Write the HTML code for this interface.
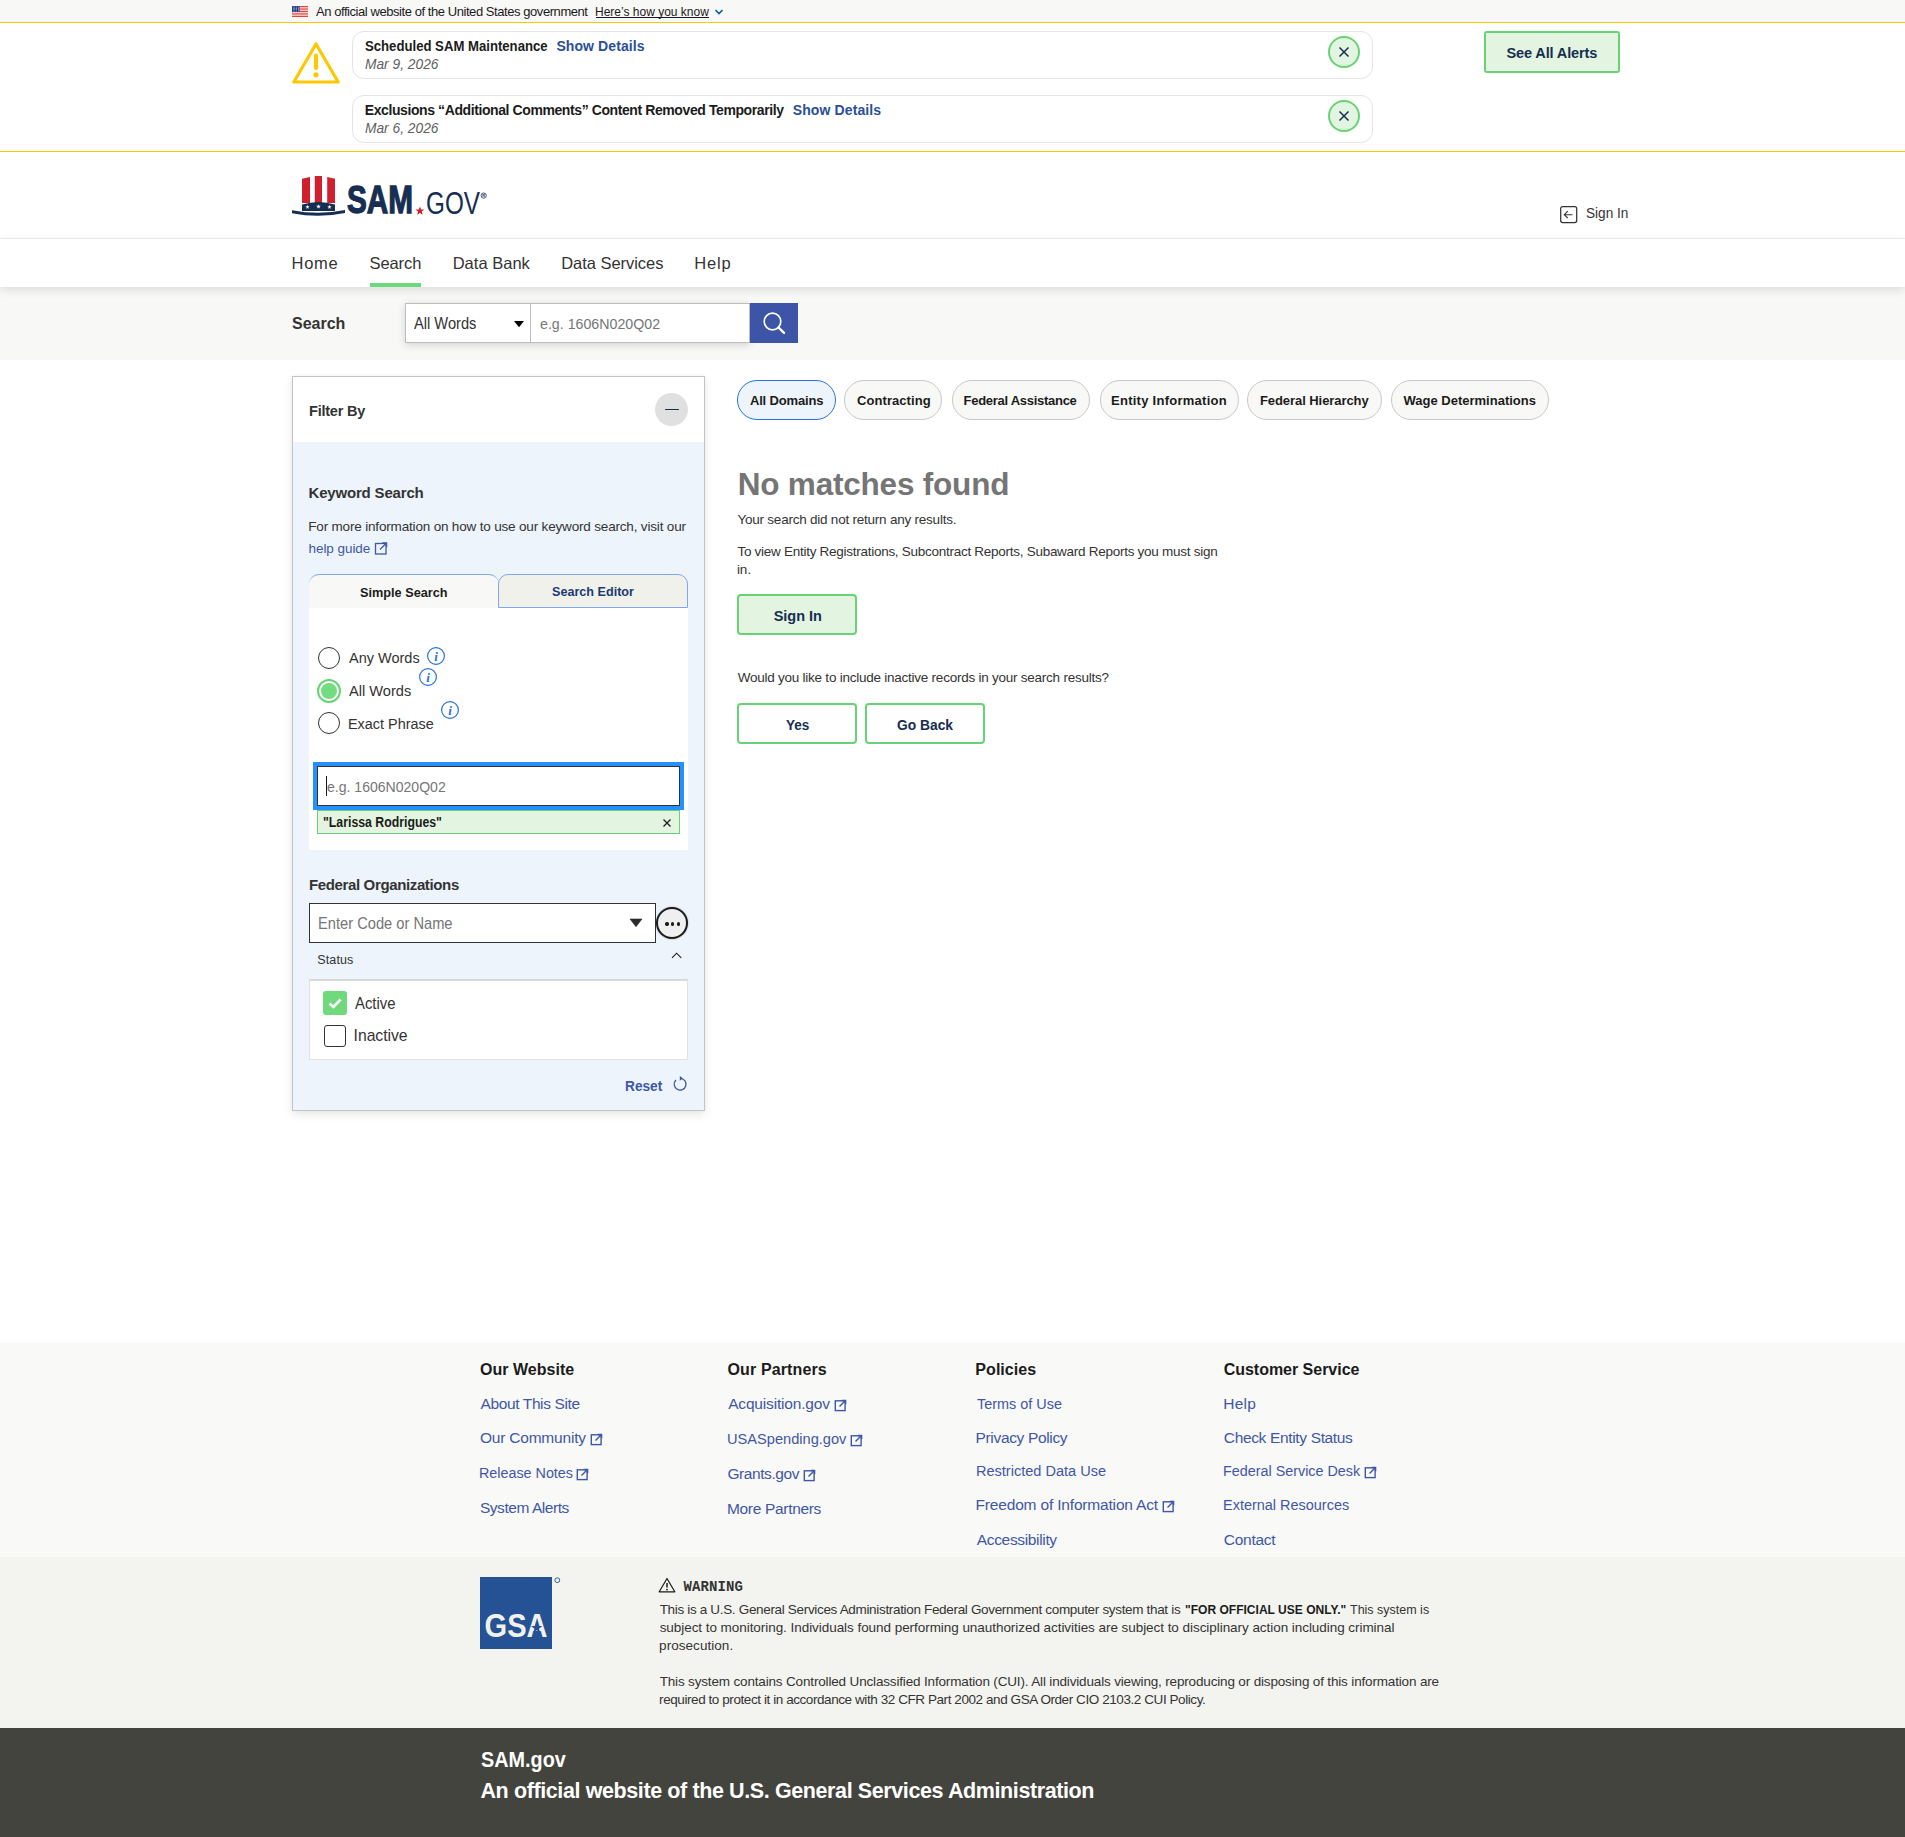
<!DOCTYPE html>
<html><head><meta charset="utf-8"><title>SAM.gov | Search</title>
<style>
html,body{margin:0;padding:0;}
body{width:1905px;height:1837px;position:relative;overflow:hidden;background:#fff;font-family:"Liberation Sans",sans-serif;}
.t{position:absolute;white-space:nowrap;}
</style></head><body>
<div style="position:absolute;left:0px;top:0px;width:1905px;height:22px;background:#f8f8f6"></div>
<div style="position:absolute;left:0px;top:22px;width:1905px;height:1px;background:#fcc800"></div>
<svg style="position:absolute;left:292px;top:6px;" width="16" height="11" viewBox="0 0 16 11"><rect width="16" height="11" fill="#fff"/><rect y="0.00" width="16" height="0.85" fill="#d52b1e"/><rect y="1.69" width="16" height="0.85" fill="#d52b1e"/><rect y="3.38" width="16" height="0.85" fill="#d52b1e"/><rect y="5.08" width="16" height="0.85" fill="#d52b1e"/><rect y="6.77" width="16" height="0.85" fill="#d52b1e"/><rect y="8.46" width="16" height="0.85" fill="#d52b1e"/><rect y="10.15" width="16" height="0.85" fill="#d52b1e"/><rect width="7.5" height="6" fill="#1e3a8a"/><circle cx="1.2" cy="1.0" r="0.45" fill="#fff"/><circle cx="2.9" cy="1.0" r="0.45" fill="#fff"/><circle cx="4.6" cy="1.0" r="0.45" fill="#fff"/><circle cx="6.3" cy="1.0" r="0.45" fill="#fff"/><circle cx="1.2" cy="2.4" r="0.45" fill="#fff"/><circle cx="2.9" cy="2.4" r="0.45" fill="#fff"/><circle cx="4.6" cy="2.4" r="0.45" fill="#fff"/><circle cx="6.3" cy="2.4" r="0.45" fill="#fff"/><circle cx="1.2" cy="3.7" r="0.45" fill="#fff"/><circle cx="2.9" cy="3.7" r="0.45" fill="#fff"/><circle cx="4.6" cy="3.7" r="0.45" fill="#fff"/><circle cx="6.3" cy="3.7" r="0.45" fill="#fff"/><circle cx="1.2" cy="5.1" r="0.45" fill="#fff"/><circle cx="2.9" cy="5.1" r="0.45" fill="#fff"/><circle cx="4.6" cy="5.1" r="0.45" fill="#fff"/><circle cx="6.3" cy="5.1" r="0.45" fill="#fff"/></svg>
<div style="position:absolute;left:596px;top:17px;width:113px;height:1px;background:#1b1b1b"></div>
<svg style="position:absolute;left:714px;top:8px;" width="10" height="8" viewBox="0 0 10 8"><path d="M1.5 2 L5 5.5 L8.5 2" fill="none" stroke="#005ea2" stroke-width="1.6"/></svg>
<div style="position:absolute;left:0px;top:152px;width:1905px;height:0px;"></div>
<div style="position:absolute;left:0px;top:151px;width:1905px;height:1px;background:#fcc800"></div>
<svg style="position:absolute;left:290px;top:40px;" width="52" height="46" viewBox="0 0 52 46"><path d="M26 4 L3.8 42 L48.2 42 Z" fill="none" stroke="#fcc800" stroke-width="3.2" stroke-linejoin="round"/><path d="M26 15.5 L26 28" stroke="#fcc800" stroke-width="4.2" stroke-linecap="round"/><circle cx="26" cy="34.8" r="2.6" fill="#fcc800"/></svg>
<div style="position:absolute;left:352px;top:31px;width:1019px;height:46px;border:1px solid #e4e4e4;border-radius:12px;background:#fff"></div>
<div style="position:absolute;left:1328px;top:36px;width:28px;height:28px;border:2px solid #66d474;border-radius:50%;background:#e3f4e0"></div>
<svg style="position:absolute;left:1338px;top:46px;" width="12" height="12" viewBox="0 0 12 12"><path d="M1.5 1.5 L10.5 10.5 M10.5 1.5 L1.5 10.5" stroke="#162e51" stroke-width="1.5"/></svg>
<div style="position:absolute;left:352px;top:95px;width:1019px;height:46px;border:1px solid #e4e4e4;border-radius:12px;background:#fff"></div>
<div style="position:absolute;left:1328px;top:100px;width:28px;height:28px;border:2px solid #66d474;border-radius:50%;background:#e3f4e0"></div>
<svg style="position:absolute;left:1338px;top:110px;" width="12" height="12" viewBox="0 0 12 12"><path d="M1.5 1.5 L10.5 10.5 M10.5 1.5 L1.5 10.5" stroke="#162e51" stroke-width="1.5"/></svg>
<div style="position:absolute;left:1484px;top:31px;width:132px;height:38px;border:2px solid #66d474;border-radius:3px;background:#e3f4e0"></div>
<div style="position:absolute;left:0px;top:238px;width:1905px;height:1px;background:#efefea"></div>
<svg style="position:absolute;left:290px;top:174px;" width="200" height="46" viewBox="0 0 200 46"><path d="M12 4.8 L20 3 L20 29 L12 29 Z" fill="#d0202f"/><rect x="24.8" y="2" width="7.2" height="27" fill="#d0202f"/><path d="M37.2 3 L45 4.8 L45 29 L37.2 29 Z" fill="#d0202f"/><path d="M12 37 V30.5 Q28.5 25.5 45 30.5 V37 Z" fill="#162e51"/><path d="M2 36.2 Q28.5 41.5 55 36 L55 39 Q28.5 44.5 2 39.2 Z" fill="#162e51"/><polygon points="17.50,30.80 18.04,32.25 19.59,32.32 18.38,33.29 18.79,34.78 17.50,33.92 16.21,34.78 16.62,33.29 15.41,32.32 16.96,32.25" fill="#fff"/><polygon points="28.50,30.20 29.09,31.78 30.78,31.86 29.46,32.91 29.91,34.54 28.50,33.61 27.09,34.54 27.54,32.91 26.22,31.86 27.91,31.78" fill="#fff"/><polygon points="39.50,30.80 40.04,32.25 41.59,32.32 40.38,33.29 40.79,34.78 39.50,33.92 38.21,34.78 38.62,33.29 37.41,32.32 38.96,32.25" fill="#fff"/><polygon points="129.90,32.40 131.04,35.44 134.27,35.58 131.74,37.60 132.60,40.72 129.90,38.93 127.20,40.72 128.06,37.60 125.53,35.58 128.76,35.44" fill="#d0202f"/><text x="57" y="39" font-family="Liberation Sans" font-weight="700" font-size="39" textLength="66" lengthAdjust="spacingAndGlyphs" fill="#162e51" stroke="#162e51" stroke-width="1.3">SAM</text><text x="136" y="39.5" font-family="Liberation Sans" font-weight="400" font-size="31" textLength="54" lengthAdjust="spacingAndGlyphs" fill="#162e51">GOV</text><circle cx="193.7" cy="21.6" r="2.6" fill="none" stroke="#162e51" stroke-width="0.8"/><text x="192.2" y="23.2" font-family="Liberation Sans" font-size="4" font-weight="700" fill="#162e51">R</text></svg>
<svg style="position:absolute;left:1559px;top:205px;" width="20" height="20" viewBox="0 0 20 20"><rect x="1.7" y="1.6" width="16" height="16" rx="2" fill="none" stroke="#333" stroke-width="1.25"/><path d="M13.5 9.7 H5.5 M8.8 6.2 L5.3 9.7 L8.8 13.2" fill="none" stroke="#333" stroke-width="1.15"/></svg>
<div style="position:absolute;left:0px;top:239px;width:1905px;height:48px;background:#fff;box-shadow:0 3px 9px rgba(0,0,0,0.11);z-index:2"></div>
<div style="position:absolute;left:370px;top:283px;width:51px;height:4px;background:#6cd97a;z-index:3"></div>
<div style="position:absolute;left:0px;top:287px;width:1905px;height:73px;background:#f8f8f6"></div>
<div style="position:absolute;left:405px;top:303px;width:345px;height:40px;background:#fff;box-shadow:0 2px 8px rgba(0,0,0,0.15)"></div>
<div style="position:absolute;left:405px;top:303px;width:126px;height:40px;box-sizing:border-box;border:1px solid #bdbdbd;background:#fff"></div>
<div style="position:absolute;left:530px;top:303px;width:220px;height:40px;box-sizing:border-box;border:1px solid #bdbdbd;background:#fff"></div>
<svg style="position:absolute;left:513px;top:320px;" width="12" height="8" viewBox="0 0 12 8"><path d="M1 1 H11 L6 7.3 Z" fill="#000"/></svg>
<div style="position:absolute;left:750px;top:303px;width:48px;height:40px;background:#3d55a6"></div>
<svg style="position:absolute;left:760px;top:308px;" width="28" height="30" viewBox="0 0 28 30"><circle cx="12.5" cy="13.5" r="8.3" fill="none" stroke="#fff" stroke-width="1.7"/><path d="M18.5 19.5 L24 24.8" stroke="#fff" stroke-width="2.4" stroke-linecap="round"/></svg>
<div style="position:absolute;left:292px;top:376px;width:413px;height:735px;box-sizing:border-box;border:1px solid #c4c4c4;background:#edf4fb;box-shadow:0 4px 9px rgba(0,0,0,0.09),0 0 3px rgba(0,0,0,0.05)"></div>
<div style="position:absolute;left:293px;top:377px;width:411px;height:65px;background:#fff"></div>
<div style="position:absolute;left:655px;top:393px;width:33px;height:33px;background:#e0e0e0;border-radius:50%"></div>
<div style="position:absolute;left:665px;top:408.7px;width:14px;height:1.6px;background:#162e51;border-radius:1px"></div>
<svg style="position:absolute;left:374px;top:542px;" width="14" height="13" viewBox="0 0 14 13"><rect x="1.5" y="1.5" width="10.5" height="10.5" fill="none" stroke="#3f57a6" stroke-width="1.3"/><path d="M6 7.5 L12.5 1" stroke="#3f57a6" stroke-width="1.3"/><path d="M8.3 0.9 H12.6 V5.2" fill="none" stroke="#3f57a6" stroke-width="1.3"/></svg>
<div style="position:absolute;left:309px;top:608px;width:379px;height:242px;background:#fff"></div>
<div style="position:absolute;left:309px;top:574px;width:190px;height:34px;box-sizing:border-box;border-top:1px solid #7ea6f1;border-radius:10px 10px 0 0;background:#f8f8f6"></div>
<div style="position:absolute;left:498px;top:574px;width:190px;height:34px;box-sizing:border-box;border:1px solid #7ea6f1;border-radius:10px 10px 0 0;background:#f1f1ec"></div>
<div style="position:absolute;left:318px;top:647px;width:22px;height:22px;box-sizing:border-box;border:1px solid #333;border-radius:50%;background:#fff;top:647px"></div>
<div style="position:absolute;left:318px;top:647px;width:22px;height:22px;box-sizing:border-box;border:1px solid #333;border-radius:50%;background:#fff;top:712px"></div>
<div style="position:absolute;left:317px;top:679px;width:24px;height:24px;box-sizing:border-box;border:2px solid #66d474;border-radius:50%;background:#fff"></div>
<div style="position:absolute;left:321px;top:683px;width:16px;height:16px;border-radius:50%;background:#73dc80"></div>
<svg style="position:absolute;left:426px;top:646px;" width="20" height="20" viewBox="0 0 20 20"><circle cx="10" cy="10" r="8.4" fill="none" stroke="#2672de" stroke-width="1.2"/><text x="10" y="14.6" text-anchor="middle" font-family="Liberation Serif" font-style="italic" font-weight="700" font-size="13" fill="#2672de">i</text></svg>
<svg style="position:absolute;left:418px;top:667px;" width="20" height="20" viewBox="0 0 20 20"><circle cx="10" cy="10" r="8.4" fill="none" stroke="#2672de" stroke-width="1.2"/><text x="10" y="14.6" text-anchor="middle" font-family="Liberation Serif" font-style="italic" font-weight="700" font-size="13" fill="#2672de">i</text></svg>
<svg style="position:absolute;left:440px;top:700px;" width="20" height="20" viewBox="0 0 20 20"><circle cx="10" cy="10" r="8.4" fill="none" stroke="#2672de" stroke-width="1.2"/><text x="10" y="14.6" text-anchor="middle" font-family="Liberation Serif" font-style="italic" font-weight="700" font-size="13" fill="#2672de">i</text></svg>
<div style="position:absolute;left:313px;top:762px;width:371px;height:48px;background:#2491ff"></div>
<div style="position:absolute;left:317px;top:766px;width:363px;height:40px;box-sizing:border-box;border:1px solid #333;background:#fff"></div>
<div style="position:absolute;left:326px;top:776px;width:1.3px;height:20px;background:#1b1b1b"></div>
<div style="position:absolute;left:317px;top:810px;width:363px;height:24px;box-sizing:border-box;border:1px solid #66d474;background:#e3f4e0"></div>
<svg style="position:absolute;left:661px;top:817px;" width="12" height="12" viewBox="0 0 12 12"><path d="M2.5 2.5 L9.5 9.5 M9.5 2.5 L2.5 9.5" stroke="#1b1b1b" stroke-width="1.3"/></svg>
<div style="position:absolute;left:309px;top:903px;width:347px;height:40px;box-sizing:border-box;border:1px solid #333;background:#fff"></div>
<svg style="position:absolute;left:628px;top:917px;" width="16" height="12" viewBox="0 0 16 12"><path d="M2 2 H14 L8 9.7 Z" fill="#2b2b2b" stroke="#2b2b2b" stroke-width="0.6" stroke-linejoin="round"/></svg>
<div style="position:absolute;left:656px;top:907px;width:28px;height:28px;border:2px solid #1b1b1b;border-radius:50%;background:#efefef;box-shadow:0 0 2px rgba(0,0,0,0.3)"></div>
<div style="position:absolute;left:665.3px;top:922.4px;width:3.4px;height:3.4px;background:#1b1b1b;border-radius:50%"></div>
<div style="position:absolute;left:670.9px;top:922.4px;width:3.4px;height:3.4px;background:#1b1b1b;border-radius:50%"></div>
<div style="position:absolute;left:676.5px;top:922.4px;width:3.4px;height:3.4px;background:#1b1b1b;border-radius:50%"></div>
<svg style="position:absolute;left:669px;top:949px;" width="16" height="12" viewBox="0 0 16 12"><path d="M3 8.8 L7.6 4.2 L12.2 8.8" fill="none" stroke="#1b1b1b" stroke-width="1.1"/></svg>
<div style="position:absolute;left:309px;top:979px;width:379px;height:81px;box-sizing:border-box;border:1px solid #e2e2e2;border-top:2px solid #dadada;background:#fff"></div>
<div style="position:absolute;left:323px;top:991px;width:24px;height:24px;background:#70d97b;border-radius:3px"></div>
<svg style="position:absolute;left:323px;top:991px;" width="24" height="24" viewBox="0 0 24 24"><path d="M6.5 12.5 L10.5 16 L17.5 8.5" fill="none" stroke="#fff" stroke-width="2.6"/></svg>
<div style="position:absolute;left:324px;top:1025px;width:22px;height:22px;box-sizing:border-box;border:1.5px solid #333;border-radius:3px;background:#fff"></div>
<svg style="position:absolute;left:670.5px;top:1075px;" width="18" height="19" viewBox="0 0 18 19"><path d="M9.1 3.3 A5.9 5.9 0 1 1 4.93 5.03" fill="none" stroke="#3f57a6" stroke-width="1.3"/><path d="M8.8 0.9 L11.9 3.3 L8.8 5.7 Z" fill="#3f57a6"/></svg>
<div style="position:absolute;left:737px;top:380px;width:99px;height:40px;box-sizing:border-box;border:1.3px solid #2672de;border-radius:20px;background:#eef4fb"></div>
<div style="position:absolute;left:844px;top:380px;width:98px;height:40px;box-sizing:border-box;border:1px solid #c8c8c8;border-radius:20px;background:#f8f8f6"></div>
<div style="position:absolute;left:952px;top:380px;width:138px;height:40px;box-sizing:border-box;border:1px solid #c8c8c8;border-radius:20px;background:#f8f8f6"></div>
<div style="position:absolute;left:1100px;top:380px;width:139px;height:40px;box-sizing:border-box;border:1px solid #c8c8c8;border-radius:20px;background:#f8f8f6"></div>
<div style="position:absolute;left:1247px;top:380px;width:135px;height:40px;box-sizing:border-box;border:1px solid #c8c8c8;border-radius:20px;background:#f8f8f6"></div>
<div style="position:absolute;left:1391px;top:380px;width:158px;height:40px;box-sizing:border-box;border:1px solid #c8c8c8;border-radius:20px;background:#f8f8f6"></div>
<div style="position:absolute;left:737px;top:594px;width:116px;height:37px;border:2px solid #66d474;border-radius:4px;background:#e3f4e0"></div>
<div style="position:absolute;left:737px;top:703px;width:116px;height:37px;border:2px solid #66d474;border-radius:4px;background:#fff"></div>
<div style="position:absolute;left:865px;top:703px;width:116px;height:37px;border:2px solid #66d474;border-radius:4px;background:#fff"></div>
<div style="position:absolute;left:0px;top:1343px;width:1905px;height:214px;background:#f9f9f7"></div>
<svg style="position:absolute;left:590px;top:1433px;" width="13" height="13" viewBox="0 0 13 13"><rect x="1.3" y="1.8" width="9.8" height="9.8" fill="none" stroke="#3f57a6" stroke-width="1.4"/><path d="M5.5 7.5 L11.2 1.8" stroke="#3f57a6" stroke-width="1.4"/><path d="M7.8 1.5 H11.6 V5.3" fill="none" stroke="#3f57a6" stroke-width="1.4"/></svg>
<svg style="position:absolute;left:576px;top:1468px;" width="13" height="13" viewBox="0 0 13 13"><rect x="1.3" y="1.8" width="9.8" height="9.8" fill="none" stroke="#3f57a6" stroke-width="1.4"/><path d="M5.5 7.5 L11.2 1.8" stroke="#3f57a6" stroke-width="1.4"/><path d="M7.8 1.5 H11.6 V5.3" fill="none" stroke="#3f57a6" stroke-width="1.4"/></svg>
<svg style="position:absolute;left:834px;top:1399px;" width="13" height="13" viewBox="0 0 13 13"><rect x="1.3" y="1.8" width="9.8" height="9.8" fill="none" stroke="#3f57a6" stroke-width="1.4"/><path d="M5.5 7.5 L11.2 1.8" stroke="#3f57a6" stroke-width="1.4"/><path d="M7.8 1.5 H11.6 V5.3" fill="none" stroke="#3f57a6" stroke-width="1.4"/></svg>
<svg style="position:absolute;left:850px;top:1434px;" width="13" height="13" viewBox="0 0 13 13"><rect x="1.3" y="1.8" width="9.8" height="9.8" fill="none" stroke="#3f57a6" stroke-width="1.4"/><path d="M5.5 7.5 L11.2 1.8" stroke="#3f57a6" stroke-width="1.4"/><path d="M7.8 1.5 H11.6 V5.3" fill="none" stroke="#3f57a6" stroke-width="1.4"/></svg>
<svg style="position:absolute;left:803px;top:1469px;" width="13" height="13" viewBox="0 0 13 13"><rect x="1.3" y="1.8" width="9.8" height="9.8" fill="none" stroke="#3f57a6" stroke-width="1.4"/><path d="M5.5 7.5 L11.2 1.8" stroke="#3f57a6" stroke-width="1.4"/><path d="M7.8 1.5 H11.6 V5.3" fill="none" stroke="#3f57a6" stroke-width="1.4"/></svg>
<svg style="position:absolute;left:1162px;top:1500px;" width="13" height="13" viewBox="0 0 13 13"><rect x="1.3" y="1.8" width="9.8" height="9.8" fill="none" stroke="#3f57a6" stroke-width="1.4"/><path d="M5.5 7.5 L11.2 1.8" stroke="#3f57a6" stroke-width="1.4"/><path d="M7.8 1.5 H11.6 V5.3" fill="none" stroke="#3f57a6" stroke-width="1.4"/></svg>
<svg style="position:absolute;left:1364px;top:1466px;" width="13" height="13" viewBox="0 0 13 13"><rect x="1.3" y="1.8" width="9.8" height="9.8" fill="none" stroke="#3f57a6" stroke-width="1.4"/><path d="M5.5 7.5 L11.2 1.8" stroke="#3f57a6" stroke-width="1.4"/><path d="M7.8 1.5 H11.6 V5.3" fill="none" stroke="#3f57a6" stroke-width="1.4"/></svg>
<div style="position:absolute;left:0px;top:1557px;width:1905px;height:171px;background:#f3f4ef"></div>
<svg style="position:absolute;left:480px;top:1577px;" width="82" height="72" viewBox="0 0 82 72"><rect width="72" height="72" fill="#255294"/><text x="4.6" y="60.2" font-family="Liberation Sans" font-weight="700" font-size="34" textLength="63" lengthAdjust="spacingAndGlyphs" fill="#f1f1ec">GSA</text><polygon points="56.7,45 58.1,49 62.3,49.1 59,51.7 60.2,55.8 56.7,53.3 53.2,55.8 54.4,51.7 51.1,49.1 55.3,49" fill="#255294"/><circle cx="77.3" cy="3.2" r="2.4" fill="none" stroke="#255294" stroke-width="0.9"/></svg>
<svg style="position:absolute;left:658px;top:1577px;" width="18" height="16" viewBox="0 0 18 16"><path d="M9 1.5 L1.2 14.8 H16.8 Z" fill="none" stroke="#1b1b1b" stroke-width="1.2" stroke-linejoin="round"/><path d="M9 6 V10.5" stroke="#1b1b1b" stroke-width="1.5"/><circle cx="9" cy="12.6" r="0.9" fill="#1b1b1b"/></svg>
<div style="position:absolute;left:0px;top:1728px;width:1905px;height:109px;background:#44443e"></div>
<div class="t" style="left:316.00px;top:5px;font:normal 400 13px/1 'Liberation Sans', sans-serif;color:#1b1b1b;letter-spacing:-0.438px;">An official website of the United States government</div>
<div class="t" style="left:595.04px;top:5px;font:normal 400 13px/1 'Liberation Sans', sans-serif;color:#1b1b1b;transform:scaleX(0.9233);transform-origin:0 0;">Here’s how you know</div>
<div class="t" style="left:365.34px;top:39px;font:normal 700 14px/1 'Liberation Sans', sans-serif;color:#1b1b1b;transform:scaleX(0.9389);transform-origin:0 0;">Scheduled SAM Maintenance</div>
<div class="t" style="left:556.42px;top:39px;font:normal 700 14px/1 'Liberation Sans', sans-serif;color:#2a4f96;letter-spacing:0.087px;">Show Details</div>
<div class="t" style="left:365.19px;top:55.7px;font:italic 400 15px/1 'Liberation Sans', sans-serif;color:#606060;transform:scaleX(0.9177);transform-origin:0 0;">Mar 9, 2026</div>
<div class="t" style="left:364.76px;top:103px;font:normal 700 14px/1 'Liberation Sans', sans-serif;color:#1b1b1b;letter-spacing:-0.406px;">Exclusions “Additional Comments” Content Removed Temporarily</div>
<div class="t" style="left:792.72px;top:103px;font:normal 700 14px/1 'Liberation Sans', sans-serif;color:#2a4f96;letter-spacing:0.114px;">Show Details</div>
<div class="t" style="left:365.19px;top:119.80000000000001px;font:italic 400 15px/1 'Liberation Sans', sans-serif;color:#606060;transform:scaleX(0.9177);transform-origin:0 0;">Mar 6, 2026</div>
<div class="t" style="left:1506.51px;top:46px;font:normal 700 14.5px/1 'Liberation Sans', sans-serif;color:#162e51;letter-spacing:-0.121px;">See All Alerts</div>
<div class="t" style="left:1585.56px;top:205px;font:normal 400 15.5px/1 'Liberation Sans', sans-serif;color:#333333;transform:scaleX(0.8789);transform-origin:0 0;">Sign In</div>
<div class="t" style="left:291.58px;top:255.2px;font:normal 400 16.5px/1 'Liberation Sans', sans-serif;color:#333333;letter-spacing:0.668px;z-index:3;">Home</div>
<div class="t" style="left:369.54px;top:255.2px;font:normal 400 16.5px/1 'Liberation Sans', sans-serif;color:#333333;letter-spacing:-0.099px;z-index:3;">Search</div>
<div class="t" style="left:452.68px;top:255.2px;font:normal 400 16.5px/1 'Liberation Sans', sans-serif;color:#333333;letter-spacing:0.014px;z-index:3;">Data Bank</div>
<div class="t" style="left:561.18px;top:255.2px;font:normal 400 16.5px/1 'Liberation Sans', sans-serif;color:#333333;letter-spacing:-0.033px;z-index:3;">Data Services</div>
<div class="t" style="left:694.18px;top:255.2px;font:normal 400 16.5px/1 'Liberation Sans', sans-serif;color:#333333;letter-spacing:0.827px;z-index:3;">Help</div>
<div class="t" style="left:292.08px;top:316px;font:normal 700 16px/1 'Liberation Sans', sans-serif;color:#333333;letter-spacing:-0.015px;">Search</div>
<div class="t" style="left:414.30px;top:316px;font:normal 400 15.75px/1 'Liberation Sans', sans-serif;color:#333333;transform:scaleX(0.9306);transform-origin:0 0;">All Words</div>
<div class="t" style="left:539.73px;top:316.2px;font:normal 400 15.5px/1 'Liberation Sans', sans-serif;color:#767676;transform:scaleX(0.9163);transform-origin:0 0;">e.g. 1606N020Q02</div>
<div class="t" style="left:309.03px;top:404px;font:normal 700 14.5px/1 'Liberation Sans', sans-serif;color:#333333;letter-spacing:-0.225px;">Filter By</div>
<div class="t" style="left:308.50px;top:485px;font:normal 700 15px/1 'Liberation Sans', sans-serif;color:#333333;letter-spacing:-0.180px;">Keyword Search</div>
<div class="t" style="left:308.22px;top:519.6px;font:normal 400 13.5px/1 'Liberation Sans', sans-serif;color:#333333;letter-spacing:-0.173px;">For more information on how to use our keyword search, visit our</div>
<div class="t" style="left:308.49px;top:541.7px;font:normal 400 13.5px/1 'Liberation Sans', sans-serif;color:#3f57a6;letter-spacing:-0.056px;">help guide</div>
<div class="t" style="left:359.75px;top:585.5px;font:normal 700 13.5px/1 'Liberation Sans', sans-serif;color:#1b1b1b;transform:scaleX(0.9407);transform-origin:0 0;">Simple Search</div>
<div class="t" style="left:552.05px;top:585px;font:normal 700 13.5px/1 'Liberation Sans', sans-serif;color:#1c3a73;transform:scaleX(0.9338);transform-origin:0 0;">Search Editor</div>
<div class="t" style="left:349.00px;top:649.7px;font:normal 400 15.5px/1 'Liberation Sans', sans-serif;color:#333333;transform:scaleX(0.9354);transform-origin:0 0;">Any Words</div>
<div class="t" style="left:349.00px;top:682.9px;font:normal 400 15.5px/1 'Liberation Sans', sans-serif;color:#333333;transform:scaleX(0.9425);transform-origin:0 0;">All Words</div>
<div class="t" style="left:347.85px;top:715.6px;font:normal 400 15.5px/1 'Liberation Sans', sans-serif;color:#333333;transform:scaleX(0.9294);transform-origin:0 0;">Exact Phrase</div>
<div class="t" style="left:326.74px;top:778.6px;font:normal 400 15.5px/1 'Liberation Sans', sans-serif;color:#767676;transform:scaleX(0.9062);transform-origin:0 0;">e.g. 1606N020Q02</div>
<div class="t" style="left:322.86px;top:815px;font:normal 700 14px/1 'Liberation Sans', sans-serif;color:#1b1b1b;transform:scaleX(0.8782);transform-origin:0 0;">&quot;Larissa Rodrigues&quot;</div>
<div class="t" style="left:309.00px;top:877px;font:normal 700 15px/1 'Liberation Sans', sans-serif;color:#333333;letter-spacing:-0.365px;">Federal Organizations</div>
<div class="t" style="left:317.73px;top:916px;font:normal 400 15.75px/1 'Liberation Sans', sans-serif;color:#757575;transform:scaleX(0.9312);transform-origin:0 0;">Enter Code or Name</div>
<div class="t" style="left:317.30px;top:953.7px;font:normal 400 12.5px/1 'Liberation Sans', sans-serif;color:#333333;letter-spacing:0.108px;">Status</div>
<div class="t" style="left:355.00px;top:996px;font:normal 400 15.75px/1 'Liberation Sans', sans-serif;color:#333333;transform:scaleX(0.9452);transform-origin:0 0;">Active</div>
<div class="t" style="left:353.58px;top:1028.2px;font:normal 400 15.75px/1 'Liberation Sans', sans-serif;color:#333333;letter-spacing:-0.042px;">Inactive</div>
<div class="t" style="left:624.98px;top:1078px;font:normal 700 15px/1 'Liberation Sans', sans-serif;color:#3f57a6;transform:scaleX(0.9121);transform-origin:0 0;">Reset</div>
<div class="t" style="left:749.94px;top:393.6px;font:normal 700 13px/1 'Liberation Sans', sans-serif;color:#1b1b1b;letter-spacing:-0.159px;">All Domains</div>
<div class="t" style="left:857.08px;top:393.6px;font:normal 700 13px/1 'Liberation Sans', sans-serif;color:#1b1b1b;letter-spacing:0.057px;">Contracting</div>
<div class="t" style="left:963.52px;top:393.6px;font:normal 700 13px/1 'Liberation Sans', sans-serif;color:#1b1b1b;letter-spacing:-0.276px;">Federal Assistance</div>
<div class="t" style="left:1111.02px;top:393.6px;font:normal 700 13px/1 'Liberation Sans', sans-serif;color:#1b1b1b;letter-spacing:0.262px;">Entity Information</div>
<div class="t" style="left:1259.92px;top:393.6px;font:normal 700 13px/1 'Liberation Sans', sans-serif;color:#1b1b1b;letter-spacing:-0.063px;">Federal Hierarchy</div>
<div class="t" style="left:1403.50px;top:393.6px;font:normal 700 13px/1 'Liberation Sans', sans-serif;color:#1b1b1b;">Wage Determinations</div>
<div class="t" style="left:737.71px;top:469px;font:normal 700 31.5px/1 'Liberation Sans', sans-serif;color:#757575;letter-spacing:-0.204px;">No matches found</div>
<div class="t" style="left:737.43px;top:513.2px;font:normal 400 13.5px/1 'Liberation Sans', sans-serif;color:#333333;letter-spacing:-0.226px;">Your search did not return any results.</div>
<div class="t" style="left:737.43px;top:545px;font:normal 400 13.5px/1 'Liberation Sans', sans-serif;color:#333333;letter-spacing:-0.272px;">To view Entity Registrations, Subcontract Reports, Subaward Reports you must sign</div>
<div class="t" style="left:736.89px;top:563px;font:normal 400 13.5px/1 'Liberation Sans', sans-serif;color:#333333;">in.</div>
<div class="t" style="left:773.71px;top:609px;font:normal 700 14.5px/1 'Liberation Sans', sans-serif;color:#162e51;letter-spacing:-0.026px;">Sign In</div>
<div class="t" style="left:737.70px;top:671.4px;font:normal 400 13.5px/1 'Liberation Sans', sans-serif;color:#333333;letter-spacing:-0.241px;">Would you like to include inactive records in your search results?</div>
<div class="t" style="left:785.86px;top:718px;font:normal 700 14.5px/1 'Liberation Sans', sans-serif;color:#162e51;transform:scaleX(0.9330);transform-origin:0 0;">Yes</div>
<div class="t" style="left:897.15px;top:718px;font:normal 700 14.5px/1 'Liberation Sans', sans-serif;color:#162e51;transform:scaleX(0.9519);transform-origin:0 0;">Go Back</div>
<div class="t" style="left:479.96px;top:1361.6px;font:normal 700 16px/1 'Liberation Sans', sans-serif;color:#1b1b1b;letter-spacing:0.031px;">Our Website</div>
<div class="t" style="left:727.56px;top:1361.6px;font:normal 700 16px/1 'Liberation Sans', sans-serif;color:#1b1b1b;letter-spacing:0.119px;">Our Partners</div>
<div class="t" style="left:975.34px;top:1361.6px;font:normal 700 16px/1 'Liberation Sans', sans-serif;color:#1b1b1b;letter-spacing:0.052px;">Policies</div>
<div class="t" style="left:1223.66px;top:1361.6px;font:normal 700 16px/1 'Liberation Sans', sans-serif;color:#1b1b1b;letter-spacing:-0.020px;">Customer Service</div>
<div class="t" style="left:480.50px;top:1395.5px;font:normal 400 15.5px/1 'Liberation Sans', sans-serif;color:#3f57a6;letter-spacing:-0.375px;">About This Site</div>
<div class="t" style="left:479.88px;top:1430.4px;font:normal 400 15.5px/1 'Liberation Sans', sans-serif;color:#3f57a6;letter-spacing:-0.200px;">Our Community</div>
<div class="t" style="left:479.35px;top:1465.3px;font:normal 400 15.5px/1 'Liberation Sans', sans-serif;color:#3f57a6;transform:scaleX(0.9244);transform-origin:0 0;">Release Notes</div>
<div class="t" style="left:479.88px;top:1500.2px;font:normal 400 15.5px/1 'Liberation Sans', sans-serif;color:#3f57a6;letter-spacing:-0.443px;">System Alerts</div>
<div class="t" style="left:728.20px;top:1395.7px;font:normal 400 15.5px/1 'Liberation Sans', sans-serif;color:#3f57a6;letter-spacing:-0.175px;">Acquisition.gov</div>
<div class="t" style="left:727.18px;top:1431.2px;font:normal 400 15.5px/1 'Liberation Sans', sans-serif;color:#3f57a6;transform:scaleX(0.9428);transform-origin:0 0;">USASpending.gov</div>
<div class="t" style="left:727.43px;top:1466.2px;font:normal 400 15.5px/1 'Liberation Sans', sans-serif;color:#3f57a6;letter-spacing:-0.426px;">Grants.gov</div>
<div class="t" style="left:726.96px;top:1500.7px;font:normal 400 15.5px/1 'Liberation Sans', sans-serif;color:#3f57a6;letter-spacing:-0.316px;">More Partners</div>
<div class="t" style="left:976.51px;top:1396px;font:normal 400 15.5px/1 'Liberation Sans', sans-serif;color:#3f57a6;transform:scaleX(0.9311);transform-origin:0 0;">Terms of Use</div>
<div class="t" style="left:975.56px;top:1430px;font:normal 400 15.5px/1 'Liberation Sans', sans-serif;color:#3f57a6;letter-spacing:-0.340px;">Privacy Policy</div>
<div class="t" style="left:975.64px;top:1463px;font:normal 400 15.5px/1 'Liberation Sans', sans-serif;color:#3f57a6;transform:scaleX(0.9373);transform-origin:0 0;">Restricted Data Use</div>
<div class="t" style="left:975.56px;top:1497px;font:normal 400 15.5px/1 'Liberation Sans', sans-serif;color:#3f57a6;letter-spacing:-0.176px;">Freedom of Information Act</div>
<div class="t" style="left:976.80px;top:1532px;font:normal 400 15.5px/1 'Liberation Sans', sans-serif;color:#3f57a6;letter-spacing:-0.342px;">Accessibility</div>
<div class="t" style="left:1223.36px;top:1396px;font:normal 400 15.5px/1 'Liberation Sans', sans-serif;color:#3f57a6;letter-spacing:0.207px;">Help</div>
<div class="t" style="left:1223.82px;top:1430px;font:normal 400 15.5px/1 'Liberation Sans', sans-serif;color:#3f57a6;letter-spacing:-0.345px;">Check Entity Status</div>
<div class="t" style="left:1223.45px;top:1463px;font:normal 400 15.5px/1 'Liberation Sans', sans-serif;color:#3f57a6;transform:scaleX(0.9260);transform-origin:0 0;">Federal Service Desk</div>
<div class="t" style="left:1223.44px;top:1497px;font:normal 400 15.5px/1 'Liberation Sans', sans-serif;color:#3f57a6;transform:scaleX(0.9330);transform-origin:0 0;">External Resources</div>
<div class="t" style="left:1223.82px;top:1532px;font:normal 400 15.5px/1 'Liberation Sans', sans-serif;color:#3f57a6;letter-spacing:-0.263px;">Contact</div>
<div class="t" style="left:683.60px;top:1580px;font:normal 700 14px/1 'Liberation Mono', monospace;color:#333333;letter-spacing:0.092px;">WARNING</div>
<div class="t" style="left:659.63px;top:1603.1px;font:normal 400 13.5px/1 'Liberation Sans', sans-serif;color:#333333;letter-spacing:-0.329px;">This is a U.S. General Services Administration Federal Government computer system that is</div>
<div class="t" style="left:1184.58px;top:1603.1px;font:normal 700 13.5px/1 'Liberation Sans', sans-serif;color:#1b1b1b;transform:scaleX(0.8914);transform-origin:0 0;">&quot;FOR OFFICIAL USE ONLY.&quot;</div>
<div class="t" style="left:1349.75px;top:1603.1px;font:normal 400 13.5px/1 'Liberation Sans', sans-serif;color:#333333;transform:scaleX(0.9253);transform-origin:0 0;">This system is</div>
<div class="t" style="left:659.63px;top:1621.2px;font:normal 400 13.5px/1 'Liberation Sans', sans-serif;color:#333333;letter-spacing:-0.051px;">subject to monitoring. Individuals found performing unauthorized activities are subject to disciplinary action including criminal</div>
<div class="t" style="left:659.09px;top:1638.9px;font:normal 400 13.5px/1 'Liberation Sans', sans-serif;color:#333333;letter-spacing:0.050px;">prosecution.</div>
<div class="t" style="left:659.63px;top:1675.1px;font:normal 400 13.5px/1 'Liberation Sans', sans-serif;color:#333333;letter-spacing:-0.161px;">This system contains Controlled Unclassified Information (CUI). All individuals viewing, reproducing or disposing of this information are</div>
<div class="t" style="left:659.09px;top:1692.8px;font:normal 400 13.5px/1 'Liberation Sans', sans-serif;color:#333333;letter-spacing:-0.424px;">required to protect it in accordance with 32 CFR Part 2002 and GSA Order CIO 2103.2 CUI Policy.</div>
<div class="t" style="left:480.50px;top:1749.8px;font:normal 700 21.5px/1 'Liberation Sans', sans-serif;color:#fff;transform:scaleX(0.9222);transform-origin:0 0;">SAM.gov</div>
<div class="t" style="left:480.47px;top:1780.9px;font:normal 700 21.5px/1 'Liberation Sans', sans-serif;color:#fff;letter-spacing:-0.393px;">An official website of the U.S. General Services Administration</div>
</body></html>
